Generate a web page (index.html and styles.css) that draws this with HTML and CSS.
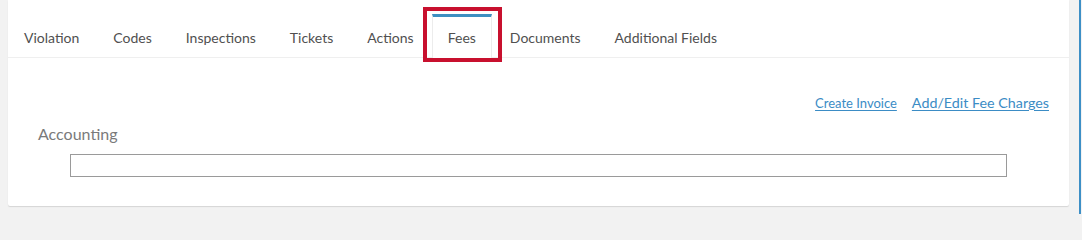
FILE: index.html
```html
<!DOCTYPE html>
<html>
<head>
<meta charset="utf-8">
<link rel="stylesheet" href="styles.css">
</head>
<body>
<div class="card">
  <ul class="tabs">
    <li class="tab">Violation</li>
    <li class="tab">Codes</li>
    <li class="tab">Inspections</li>
    <li class="tab">Tickets</li>
    <li class="tab">Actions</li>
    <li class="tab active">Fees</li>
    <li class="tab">Documents</li>
    <li class="tab">Additional Fields</li>
  </ul>
  <div class="panel">
    <div class="links">
      <a class="link small" href="#">Create Invoice</a>
      <a class="link big" href="#">Add/Edit Fee Charges</a>
    </div>
    <div class="section">
      <div class="section-title">Accounting</div>
      <div class="box"></div>
    </div>
  </div>
</div>
<div class="edge"></div>
</body>
</html>
```
FILE: styles.css
```css
html, body {
  margin: 0;
  padding: 0;
}
body {
  background: #f2f2f2;
  width: 1082px;
  height: 214px;
  display: flex;
  align-items: flex-start;
  padding-left: 8px;
  box-sizing: border-box;
  font-family: "Source Sans Pro", Lato, "Liberation Sans", sans-serif;
  color: #505050;
  overflow: hidden;
}
.card {
  width: 1061px;
  height: 206px;
  background: #fff;
  box-shadow: 0 1px 1px rgba(0,0,0,0.12);
  border-radius: 0 0 2px 2px;
}
.edge {
  margin-left: auto;
  width: 2px;
  height: 214px;
  background: #3d8fc6;
  margin-right: 1px;
}
.tabs {
  list-style: none;
  margin: 0;
  padding: 14px 0 0 0;
  display: flex;
  border-bottom: 1px solid #efefef;
}
.tab {
  position: relative;
  font-size: 14px;
  line-height: 20px;
  padding: 11px 15px 9px 15px;
  border: 1px solid transparent;
  border-top-width: 3px;
  border-bottom: 0;
  margin-right: 2px;
  margin-bottom: -1px;
  color: #505050;
  white-space: nowrap;
}
.tab.active {
  border-color: #3d8fc1 #ececec transparent #ececec;
  background: #fff;
  padding-bottom: 10px;
}
.tab.active::after {
  content: "";
  position: absolute;
  top: -10px;
  left: -10px;
  right: -11px;
  bottom: -4px;
  border: 4px solid #c8102e;
}
.panel {
  padding: 0 20px 0 30px;
}
.links {
  display: flex;
  justify-content: flex-end;
  align-items: baseline;
  gap: 15px;
  padding-top: 36px;
}
.link {
  color: #3b8cc5;
  text-decoration: underline;
  text-underline-offset: 2px;
}
.link.small {
  font-size: 13px;
}
.link.big {
  font-size: 14.3px;
}
.section {
  margin-top: 12px;
}
.section-title {
  font-size: 16px;
  line-height: 22px;
  color: #7a7a7a;
}
.box {
  margin: 9px 42px 0 32px;
  height: 21px;
  border: 1px solid #9a9a9a;
}
```
